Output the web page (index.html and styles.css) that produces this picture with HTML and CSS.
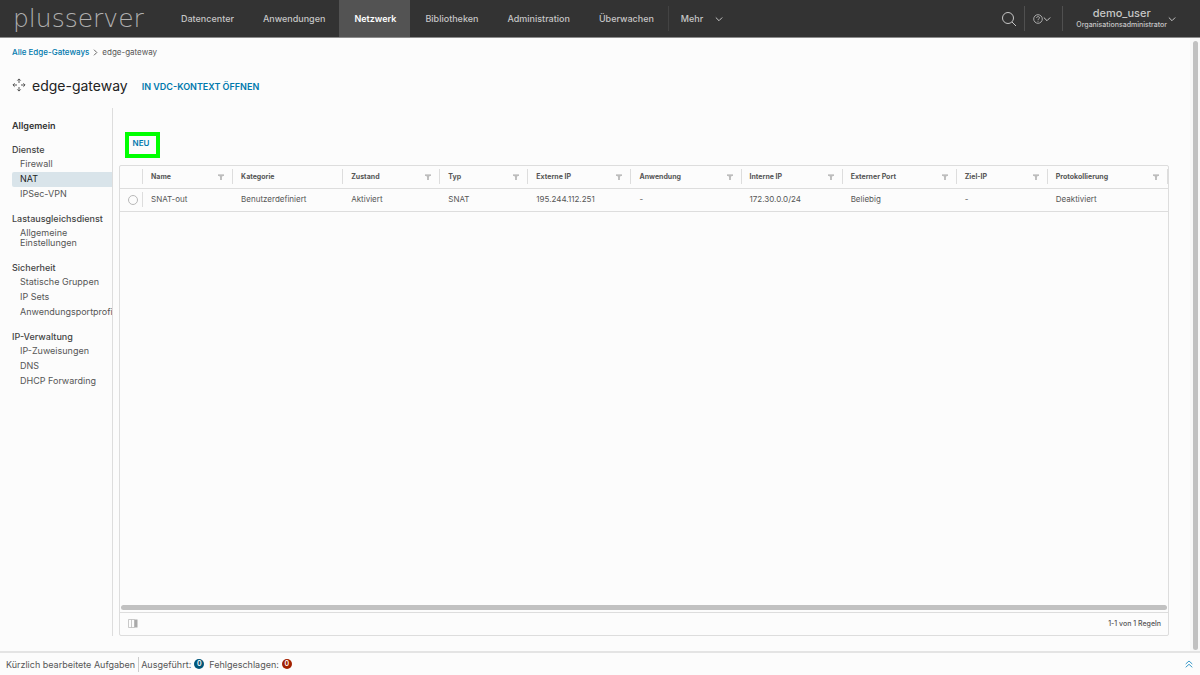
FILE: index.html
```html
<!DOCTYPE html>
<html lang="de">
<head>
<meta charset="utf-8">
<meta name="viewport" content="width=device-width, initial-scale=1">
<title>edge-gateway – NAT</title>
<link rel="stylesheet" href="styles.css">
</head>
<body>
<svg class="sprite" aria-hidden="true">
  <symbol id="filter" viewBox="0 0 8 8"><path d="M1 1.500h6v1.200H1zM2.300 3.200h3.400L4.700 4.300V7H3.300V4.300z" fill="#a8a8a8"/></symbol>
  <symbol id="chevron" viewBox="0 0 8 8"><path d="M.8 2.500L4 5.700l3.200-3.200" fill="none" stroke="currentColor"/></symbol>
</svg>
<header class="topbar">
  <a class="logo" href="#">plusserver</a>
  <nav class="mainnav" aria-label="Hauptnavigation">
    <a href="#">Datencenter</a>
    <a href="#">Anwendungen</a>
    <a class="active" href="#" aria-current="page">Netzwerk</a>
    <a href="#">Bibliotheken</a>
    <a href="#">Administration</a>
    <a href="#">Überwachen</a>
    <button class="more" type="button">Mehr <svg class="chev"><use href="#chevron"/></svg></button>
  </nav>
  <div class="tools">
    <button class="search" type="button" aria-label="Suchen">
      <svg width="16" height="16" viewBox="0 0 16 16" fill="none" stroke="currentColor"><circle cx="7" cy="7" r="5.500"/><path d="M11 11l4 4"/></svg>
    </button>
    <button class="help" type="button" aria-label="Hilfe">
      <svg width="10" height="10" viewBox="0 0 10 10" fill="none" stroke="currentColor" stroke-width=".8"><circle cx="5" cy="5" r="4.300"/><path d="M3.600 4c0-1.900 2.900-1.800 2.900-.2C6.500 4.900 5 4.800 5 6M5 6.800v.9"/></svg>
      <svg class="chev"><use href="#chevron"/></svg>
    </button>
    <button class="user" type="button">
      <span class="who"><span class="name">demo_user</span><span class="role">Organisationsadministrator</span></span>
      <svg class="chev"><use href="#chevron"/></svg>
    </button>
  </div>
</header>

<div class="page">
  <main class="main">
    <nav class="crumbs" aria-label="Brotkrumen">
      <a href="#">Alle Edge-Gateways</a>
      <svg width="5" height="7" viewBox="0 0 5 7" fill="none" stroke="#666"><path d="M1 .7l2.800 2.800L1 6.300"/></svg>
      <span>edge-gateway</span>
    </nav>
    <div class="titlebar">
      <svg width="14" height="14" viewBox="0 0 14 14" fill="none" stroke="#555"><path d="M7 5V1M5.300 2.600L7 .9l1.700 1.700M7 9v4M5.300 11.400L7 13.100l1.700-1.700M5 7H1M2.600 5.300L.9 7l1.700 1.700M9 7h4M11.400 5.300L13.100 7l-1.700 1.700"/></svg>
      <h1>edge-gateway</h1>
      <button class="context" type="button">IN VDC-KONTEXT ÖFFNEN</button>
    </div>
    <div class="body">
      <nav class="side" aria-label="Edge-Gateway">
        <a class="top" href="#">Allgemein</a>
        <h2>Dienste</h2>
        <ul>
          <li><a href="#">Firewall</a></li>
          <li><a class="active" href="#" aria-current="page">NAT</a></li>
          <li><a href="#">IPSec-VPN</a></li>
        </ul>
        <h2>Lastausgleichsdienst</h2>
        <ul>
          <li><a href="#">Allgemeine<br>Einstellungen</a></li>
        </ul>
        <h2>Sicherheit</h2>
        <ul>
          <li><a href="#">Statische Gruppen</a></li>
          <li><a href="#">IP Sets</a></li>
          <li><a href="#">Anwendungsportprofile</a></li>
        </ul>
        <h2>IP-Verwaltung</h2>
        <ul>
          <li><a href="#">IP-Zuweisungen</a></li>
          <li><a href="#">DNS</a></li>
          <li><a href="#">DHCP Forwarding</a></li>
        </ul>
      </nav>
      <section class="content">
        <button class="new" type="button">NEU</button>
        <div class="grid">
          <table>
            <colgroup>
              <col class="c-pick"><col class="c-name"><col class="c-cat"><col class="c-state"><col class="c-type"><col class="c-ext"><col class="c-app"><col class="c-int"><col class="c-port"><col class="c-dest"><col class="c-log">
            </colgroup>
            <thead>
              <tr>
                <th scope="col"><div class="cell" aria-label="Auswahl"></div></th>
                <th scope="col"><div class="cell">Name<svg class="filter"><use href="#filter"/></svg></div></th>
                <th scope="col"><div class="cell">Kategorie</div></th>
                <th scope="col"><div class="cell">Zustand<svg class="filter"><use href="#filter"/></svg></div></th>
                <th scope="col"><div class="cell">Typ<svg class="filter"><use href="#filter"/></svg></div></th>
                <th scope="col"><div class="cell">Externe IP<svg class="filter"><use href="#filter"/></svg></div></th>
                <th scope="col"><div class="cell">Anwendung<svg class="filter"><use href="#filter"/></svg></div></th>
                <th scope="col"><div class="cell">Interne IP<svg class="filter"><use href="#filter"/></svg></div></th>
                <th scope="col"><div class="cell">Externer Port<svg class="filter"><use href="#filter"/></svg></div></th>
                <th scope="col"><div class="cell">Ziel-IP<svg class="filter"><use href="#filter"/></svg></div></th>
                <th scope="col"><div class="cell">Protokollierung<svg class="filter"><use href="#filter"/></svg></div></th>
              </tr>
            </thead>
            <tbody>
              <tr>
                <td><div class="cell pick"><input type="radio" name="rule" aria-label="SNAT-out"></div></td>
                <td>SNAT-out</td>
                <td>Benutzerdefiniert</td>
                <td>Aktiviert</td>
                <td>SNAT</td>
                <td>195.244.112.251</td>
                <td>-</td>
                <td>172.30.0.0/24</td>
                <td>Beliebig</td>
                <td>-</td>
                <td>Deaktiviert</td>
              </tr>
            </tbody>
          </table>
          <div class="hscroll"></div>
          <div class="gridfoot">
            <button class="columns" type="button" aria-label="Spalten verwalten">
              <svg width="10" height="9" viewBox="0 0 10 9"><path d="M.5.500h6v8h-6zM3.500.500v8" fill="none" stroke="#bbb" stroke-width=".8"/><path d="M6.500.500h3v8h-3z" fill="#aaa"/></svg>
            </button>
            <span>1-1 von 1 Regeln</span>
          </div>
        </div>
      </section>
    </div>
  </main>
  <div class="vscroll"><div class="thumb"></div></div>
</div>

<footer class="tasks">
  <span class="recent">Kürzlich bearbeitete Aufgaben</span>
  <span class="stat">Ausgeführt: <b class="badge done">0</b></span>
  <span class="stat">Fehlgeschlagen: <b class="badge failed">0</b></span>
  <button class="expand" type="button" aria-label="Aufgaben einblenden">
    <svg width="8" height="8" viewBox="0 0 8 8" fill="none" stroke="#3a9ac9" stroke-width="1"><path d="M.7 4L4 1l3.300 3M.7 7.300L4 4.300l3.300 3"/></svg>
  </button>
</footer>
</body>
</html>
```

FILE: styles.css
```css
* { box-sizing: border-box; }

body {
  margin: 0;
  height: 100vh;
  display: flex;
  flex-direction: column;
  background: #fcfcfc;
  color: #565656;
  font: 9px/15px Inter, "Open Sans", sans-serif;
}

a { color: inherit; text-decoration: none; }

button {
  padding: 0;
  border: 0;
  background: none;
  color: inherit;
  font: inherit;
  cursor: pointer;
}

svg { flex: none; display: block; }
.sprite { display: none; }
.chev { width: 8px; height: 8px; }

/* Top bar */
.topbar {
  flex: none;
  display: flex;
  height: 38px;
  background: #333;
  border-bottom: 1px solid #8c8c8c;
  color: #c6c6c6;
}

.logo {
  width: 166px;
  padding-left: 13px;
  color: #b0b0b0;
  font: 200 25px/38px "DejaVu Sans", sans-serif;
}

.mainnav { display: flex; font-weight: 500; }
.mainnav a { padding: 0 14px 0 15px; line-height: 37px; }
.mainnav .active { background: #535353; color: #fff; font-weight: 600; }

.more {
  display: flex;
  align-items: center;
  gap: 12px;
  margin: 6px 0;
  padding-left: 12px;
  border-left: 1px solid #434343;
}

.tools { display: flex; align-items: center; margin-left: auto; }

.tools button {
  display: flex;
  align-items: center;
  height: 25px;
}

.search { padding: 0 7px; }
.help { padding: 0 11px 0 8px; border-left: 1px solid #505050; }
.user { gap: 1px; padding: 0 24px 0 13px; border-left: 1px solid #505050; }
.who { display: flex; flex-direction: column; align-items: center; }
.name { font-size: 11px; font-weight: 500; line-height: 13px; }
.role { font-size: 7px; font-weight: 500; line-height: 10px; }

/* Page */
.page { flex: 1; display: flex; min-height: 0; }

.main {
  flex: 1;
  min-width: 0;
  display: flex;
  flex-direction: column;
  padding: 7px 21px 15px 12px;
}

.vscroll {
  width: 10px;
  padding: 3px 2px 1px 3px;
  background: #f8f8f8;
}

.thumb { height: 100%; border-radius: 3px; background: #c1c1c1; }

.crumbs {
  display: flex;
  align-items: center;
  gap: 4px;
  font-size: 8px;
}

.crumbs a { color: #0079ad; font-weight: 500; }

.titlebar {
  display: flex;
  align-items: center;
  gap: 6px;
  height: 30px;
  margin: 10px 0 8px;
}

.titlebar h1 { margin: 0; color: #222; font-size: 14px; font-weight: 400; }
.context { margin: 2px 0 0 8px; color: #0079ad; font-size: 9px; font-weight: 600; }

.body { flex: 1; display: flex; min-height: 0; }

/* Side navigation */
.side {
  flex: none;
  width: 101px;
  padding-top: 10px;
  border-right: 1px solid #ddd;
  overflow: hidden;
}

.top { display: block; color: #333; font-weight: 600; }
.side h2 { margin: 9px 0 0; font-size: 9px; font-weight: 500; color: #444; }
.side ul { margin: 0; padding: 0; list-style: none; }

.side li a {
  display: block;
  padding: 2px 0 3px 8px;
  line-height: 10px;
  white-space: nowrap;
}

.side .active { background: #d9e4ea; border-radius: 2px 0 0 2px; color: #222; }

/* Rule grid */
.content {
  flex: 1;
  min-width: 0;
  display: flex;
  flex-direction: column;
  align-items: flex-start;
  padding: 24px 0 0 6px;
}

.new {
  width: 35px;
  height: 26px;
  margin: 0 0 7px 6px;
  padding: 0 3px 3px 0;
  border: 4px solid #0f0;
  color: #0079ad;
  font-size: 8px;
  font-weight: 600;
}

.grid {
  flex: 1;
  display: flex;
  flex-direction: column;
  width: 100%;
  border: 1px solid #ddd;
  border-radius: 2px;
}

table { width: 100%; table-layout: fixed; border-collapse: collapse; }

th, td {
  height: 23px;
  padding: 0 0 0 8px;
  border-bottom: 1px solid #ddd;
  text-align: left;
}

th { height: 22px; padding-left: 0; font-size: 7px; font-weight: 700; }
td { font-size: 8px; }
td:first-child { padding: 0; }

.cell {
  display: flex;
  align-items: center;
  justify-content: space-between;
  height: 15px;
  padding: 0 7px 0 8px;
  border-right: 1px solid #ddd;
}

.filter { width: 8px; height: 8px; }

.pick input {
  flex: none;
  appearance: none;
  width: 10px;
  height: 10px;
  margin: 0;
  border: 1px solid #b8b8b8;
  border-radius: 50%;
}

.c-pick { width: 23px; }
.c-name { width: 90px; }
.c-cat { width: 110px; }
.c-state { width: 97px; }
.c-type { width: 88px; }
.c-ext { width: 103px; }
.c-app { width: 110px; }
.c-int { width: 101px; }
.c-port { width: 114px; }
.c-dest { width: 91px; }
.c-log { width: 120px; }

.hscroll {
  height: 5px;
  margin: auto 1px 2px;
  border-radius: 3px;
  background: #c1c1c1;
}

.gridfoot {
  display: flex;
  align-items: center;
  justify-content: space-between;
  height: 23px;
  padding: 0 7px 2px 8px;
  border-top: 1px solid #ddd;
  font-size: 7px;
  font-weight: 500;
}

/* Task bar */
.tasks {
  flex: none;
  display: flex;
  align-items: center;
  height: 24px;
  padding: 0 7px 0 6px;
  border-top: 2px solid #e4e4e4;
}

.recent { padding-right: 3px; border-right: 1px solid #ccc; }
.stat { display: flex; align-items: center; gap: 3px; padding: 0 3px 0 2px; }

.badge {
  width: 10px;
  height: 10px;
  border-radius: 50%;
  color: #fff;
  font-size: 7px;
  font-weight: 600;
  line-height: 10px;
  text-align: center;
}

.done { background: #00567a; }
.failed { background: #a32100; }
.expand { margin-left: auto; }
```
